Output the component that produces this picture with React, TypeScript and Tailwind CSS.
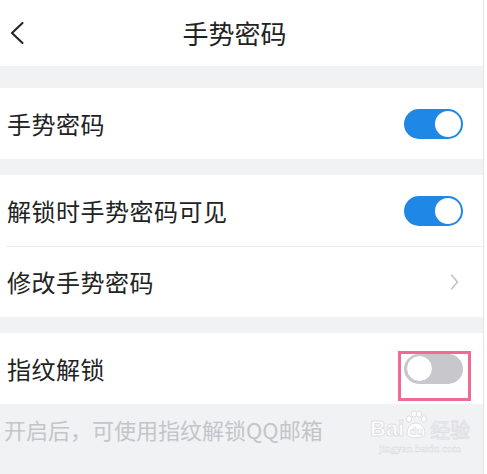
import React from 'react';

const Toggle: React.FC<{ on: boolean }> = ({ on }) => (
  <div
    className={
      on
        ? 'w-[59px] h-[30px] rounded-full bg-[#1f88e6] flex items-center justify-end p-[2px]'
        : 'w-[59px] h-[30px] rounded-full bg-[#c7c7cc] flex items-center justify-start p-[2px]'
    }
  >
    <div
      className={
        on
          ? 'w-[26px] h-[26px] rounded-full bg-white'
          : 'w-[27px] h-[27px] rounded-full bg-white border border-[#c2c2c6]'
      }
    />
  </div>
);

const Row: React.FC<{ label: string; children?: React.ReactNode; h?: string }> = ({ label, children, h = 'h-[71px]' }) => (
  <div className={`${h} bg-white flex items-center justify-between pl-[7px] pr-[20px]`}>
    <span className="text-[24px] text-[#222] leading-none tracking-[0.5px]">{label}</span>
    {children}
  </div>
);

const App: React.FC = () => {
  return (
    <div className="w-[487px] h-[474px] flex overflow-hidden font-['Noto_Sans_CJK_SC','Noto_Sans',sans-serif]">
      <div className="w-[483px] flex flex-col bg-[#f1f2f4]">
        {/* Header */}
        <div className="h-[66px] bg-white flex items-center shrink-0">
          <div className="w-[40px] flex items-center pl-[10px]">
            <svg width="14" height="22" viewBox="0 0 14 22" fill="none">
              <polyline points="12.5,1 2,11 12.5,21" stroke="#222" strokeWidth="2" strokeLinecap="round" strokeLinejoin="round" />
            </svg>
          </div>
          <div className="flex-1 text-center text-[26px] text-[#222] leading-none">手势密码</div>
          <div className="w-[54px]" />
        </div>

        <div className="h-[22px] shrink-0" />

        <Row label="手势密码">
          <Toggle on />
        </Row>

        <div className="h-[16px] shrink-0" />

        <Row label="解锁时手势密码可见">
          <Toggle on />
        </Row>
        <div className="h-px bg-white shrink-0 pl-[6px]">
          <div className="h-px bg-[#ececee]" />
        </div>
        <Row label="修改手势密码" h="h-[70px]">
          <svg width="9" height="16" viewBox="0 0 9 16" fill="none" className="mr-[4px]">
            <polyline points="1.5,1 7.5,8 1.5,15" stroke="#c4c4c8" strokeWidth="1.6" strokeLinecap="round" strokeLinejoin="round" />
          </svg>
        </Row>

        <div className="h-[16px] shrink-0" />

        <div className="relative">
          <Row label="指纹解锁">
            <Toggle on={false} />
          </Row>
          <div className="absolute left-[398px] top-[18px] w-[73px] h-[50px] border-[3px] border-[#f06b93]" />
        </div>

        {/* Footer hint */}
        <div className="relative flex-1 pl-[4px] pt-[14px]">
          <span className="text-[22px] text-[#c4c5c9] leading-none">开启后，可使用指纹解锁QQ邮箱</span>
          {/* watermark */}
          <div className="absolute left-[370px] top-[14px] flex flex-col items-center text-white [-webkit-text-stroke:1px_#e0e0e4]">
            <div className="flex items-end leading-none">
              <span className="text-[22px] font-bold font-['Liberation_Sans',sans-serif]">Bai</span>
              <span className="relative mx-[1px] w-[22px] h-[18px] flex items-center justify-center">
                <svg width="24" height="30" viewBox="0 0 24 30" className="absolute left-[-1px] bottom-0" fill="#fff" stroke="#dedee2" strokeWidth="1">
                  <ellipse cx="5" cy="9" rx="2.6" ry="3.2" />
                  <ellipse cx="10" cy="4" rx="2.6" ry="3.2" />
                  <ellipse cx="15" cy="4" rx="2.6" ry="3.2" />
                  <ellipse cx="20" cy="9" rx="2.6" ry="3.2" />
                  <path d="M3 24 C3 16 8 13 12 13 C16 13 21 16 21 24 C21 29 3 29 3 24 Z" />
                </svg>
                <span className="relative text-[11px] font-bold font-['Liberation_Sans',sans-serif] [-webkit-text-stroke:0.6px_#dcdce0]">du</span>
              </span>
              <span className="text-[20px] ml-[2px]">经验</span>
            </div>
            <span className="text-[11px] leading-none mt-[3px] font-['Liberation_Serif',serif] [-webkit-text-stroke:0.5px_#dcdce0]">jingyan.baidu.com</span>
          </div>
        </div>
      </div>
      <div className="flex-1 bg-white border-l border-[#e4e4e6]" />
    </div>
  );
};

export default App;
